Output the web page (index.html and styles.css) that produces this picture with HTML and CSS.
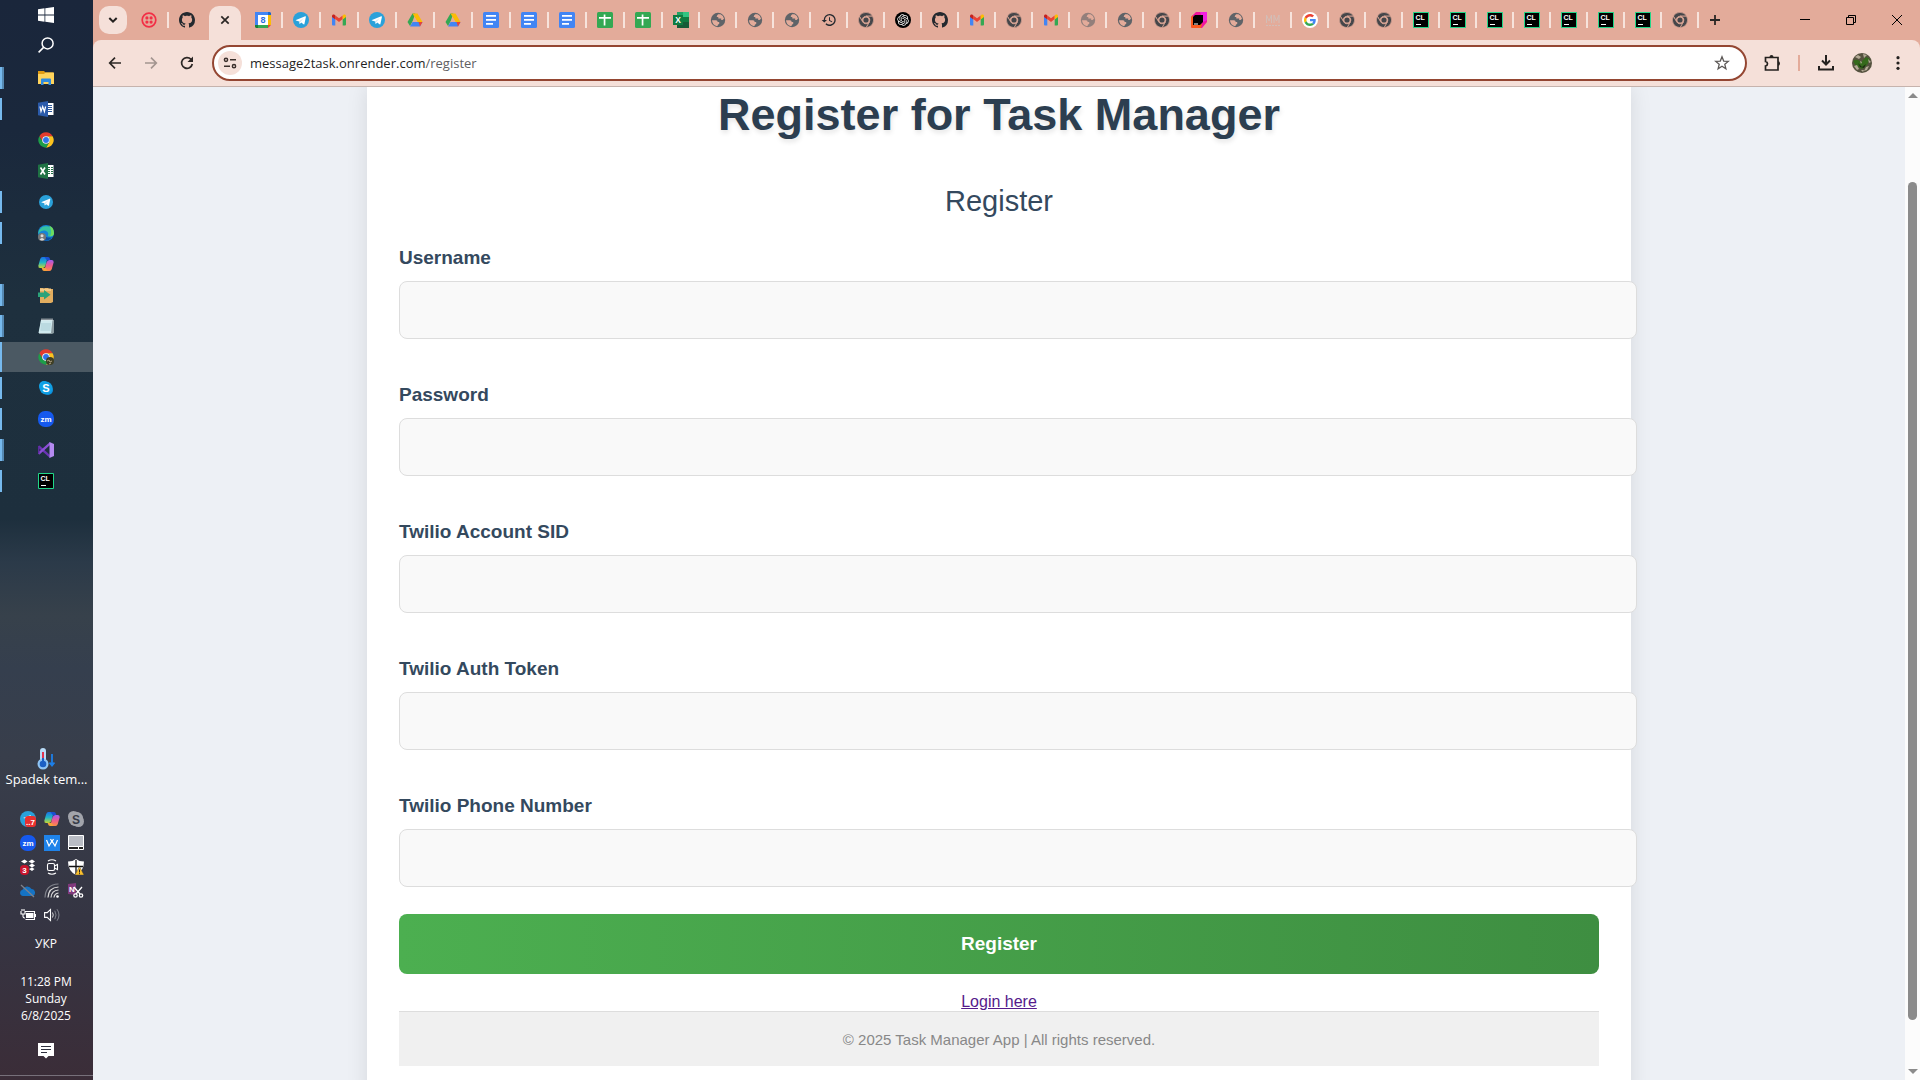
FILE: index.html
```html
<!DOCTYPE html>
<html lang="en">
<head>
<meta charset="utf-8">
<title>Register for Task Manager</title>
<link rel="stylesheet" href="styles.css">
</head>
<body>
<svg class="gradients" aria-hidden="true">
  <linearGradient id="cop1" x1="0" y1="0" x2="0" y2="1"><stop offset="0" stop-color="#1a6fe8"/><stop offset=".5" stop-color="#21b5c4"/><stop offset="1" stop-color="#c8d830"/></linearGradient>
  <linearGradient id="cop2" x1="0" y1="0" x2="0" y2="1"><stop offset="0" stop-color="#a05cf0"/><stop offset=".5" stop-color="#ee5a8e"/><stop offset="1" stop-color="#fb8d45"/></linearGradient>
</svg>
<svg class="sprite" aria-hidden="true">
  <symbol id="windows" viewBox="0 0 16 16"><path fill="#fff" d="M0 2.2 6.5 1.3v6.3H0zM7.3 1.2 16 0v7.6H7.3zM0 8.4h6.5v6.3L0 13.8zM7.3 8.4H16V16l-8.7-1.2z"/></symbol>
  <symbol id="search" viewBox="0 0 16 16"><circle cx="9.6" cy="6.4" r="5.5" fill="none" stroke="#fff" stroke-width="1.5"/><path d="M5.6 10.4.6 15.4" stroke="#fff" stroke-width="1.5"/></symbol>
  <symbol id="explorer" viewBox="0 0 16 16"><path fill="#e09c13" d="M0 1h6l1.5 1.5H15V5H0z"/><path fill="#ffd45c" d="M0 4h6l1.5-1.500H16V14H0z"/><path fill="#2f8be0" d="M3 15V9.500Q3 8.500 4 8.500h8q1 0 1 1V15h-2.500v-3h-5v3z"/></symbol>
  <symbol id="word" viewBox="0 0 16 16"><path fill="#fff" d="M9 2h6.500v12H9z"/><path stroke="#2b579a" d="M10 4.500h4M10 6.500h4M10 8.500h4M10 10.500h4"/><path fill="#2b5bab" d="M0 1.800 10 0v16L0 14.200z"/><path fill="none" stroke="#fff" stroke-width="1.200" d="m2 5.500 1 5 1.700-5 1.700 5 1.200-5"/></symbol>
  <symbol id="excel-old" viewBox="0 0 16 16"><path fill="#fff" d="M9 2h6.500v12H9z"/><path stroke="#1f7244" stroke-dasharray="2 1" d="M10 4.500h5M10 6.500h5M10 8.500h5M10 10.500h5"/><path fill="#1f7244" d="M0 1.800 10 0v16L0 14.200z"/><path fill="none" stroke="#fff" stroke-width="1.600" d="m2.500 4.500 4.500 7M7 4.500l-4.500 7"/></symbol>
  <symbol id="chrome" viewBox="-12 -12 24 24"><path fill="#e33b2e" d="M-9.960-5.750A11.500 11.500 0 0 1 9.960-5.750L0-5.750A5.750 5.750 0 0 0-4.980 2.875Z"/><path fill="#fcc31e" transform="rotate(120)" d="M-9.960-5.750A11.500 11.500 0 0 1 9.960-5.750L0-5.750A5.750 5.750 0 0 0-4.980 2.875Z"/><path fill="#1e9e49" transform="rotate(240)" d="M-9.960-5.750A11.500 11.500 0 0 1 9.960-5.750L0-5.750A5.750 5.750 0 0 0-4.980 2.875Z"/><circle r="5.700" fill="#fff"/><circle r="4.400" fill="#2f74ea"/></symbol>
  <symbol id="chrome-grey" viewBox="-12 -12 24 24"><g fill="#45464a" stroke="#e3ab9a" stroke-width="1"><path d="M-9.960-5.750A11.500 11.500 0 0 1 9.960-5.750L0-5.750A5.750 5.750 0 0 0-4.980 2.875Z"/><path transform="rotate(120)" d="M-9.960-5.750A11.500 11.500 0 0 1 9.960-5.750L0-5.750A5.750 5.750 0 0 0-4.980 2.875Z"/><path transform="rotate(240)" d="M-9.960-5.750A11.500 11.500 0 0 1 9.960-5.750L0-5.750A5.750 5.750 0 0 0-4.980 2.875Z"/></g><circle r="3.900" fill="#45464a"/></symbol>
  <symbol id="telegram" viewBox="0 0 16 16"><circle cx="8" cy="8" r="8" fill="#2aa1da"/><path fill="#fff" d="m3 7.900 9.200-3.700c.5-.2.8.1.7.7l-1.500 7c-.1.500-.5.600-.9.400L8.200 10.600l-1.200 1.200c-.3.200-.5.100-.5-.2l-.3-2.200L3 8.500c-.4-.1-.4-.4 0-.6z"/><path fill="#b9dcef" d="m6.200 9.400 4.600-3.300-3.700 4-.5 1.800z"/></symbol>
  <symbol id="edge" viewBox="0 0 16 16"><circle cx="8" cy="8" r="8" fill="#1683d8"/><path fill="#36c2a0" d="M1 5.500A8 8 0 0 1 16 8c0 2.500-2 3.500-4 3.500-1.500 0-2.500-.5-2-1.500C11 8 9 5.500 6 5.500 4 5.500 2 6.500 0 9z"/><path fill="#6fdd5c" d="M11 .6A8 8 0 0 1 16 8c0 2.500-2 3.500-4 3.200 2-3 1.500-7-1-10.600z"/><path fill="#0f4f9e" d="M6 8c0 4 4 5.500 8 4a8 8 0 0 1-8 3.700z"/><circle cx="4" cy="12" r="4" fill="#777"/><circle cx="4" cy="10.800" r="1.500" fill="#ddd"/><path fill="#ddd" d="M1.600 14.500q2.400-3.200 4.800 0Q4 16.500 1.600 14.500z"/></symbol>
  <symbol id="copilot" viewBox="0 0 16 16"><path fill="url(#cop1)" d="M4.500 1h5.300L7.500 9.500Q6.800 12 4.500 12H2Q0 12 .4 9.500L2.200 3Q2.800 1 4.500 1z"/><path fill="#1b4fd0" d="M6.500 1H10q1.500 0 2 2l.4 1.500H9z"/><path fill="url(#cop2)" d="M11.500 15H6.200L8.500 6.500Q9.200 4 11.500 4H14q2 0 1.600 2.500L13.800 13q-.6 2-2.300 2z"/><path fill="#f7a03a" d="M9.500 15H6q-1.500 0-2-2l-.3-1h4z"/></symbol>
  <symbol id="box" viewBox="0 0 16 16"><path fill="#e2ad5f" d="M2 1h3l1 1 1-1h3l1 1h4v13l-2 1H2z"/><path fill="#f2c885" d="M2 1.500h11V4H2z"/><path fill="#2ba37a" d="M0 5.500h6V3l6.500 4.700L6 12.500V10H0z"/></symbol>
  <symbol id="notepad" viewBox="0 0 16 16"><path fill="#8a9aa0" d="M3 2h13v13l-2 1H1z"/><path fill="#cfe9ee" d="M3 2h11.500L13 15H.5z"/><path stroke="#8fb8c2" stroke-width=".6" d="M3 6h10M2.800 8h10M2.600 10h10M2.400 12h10"/><path stroke="#eee" stroke-dasharray="1 1" stroke-width="2" d="M3.500 1.500H15"/></symbol>
  <symbol id="skype" viewBox="0 0 16 16"><rect x="1" y="1" width="10" height="10" rx="5" fill="#13a5ea"/><rect x="5" y="5" width="10" height="10" rx="5" fill="#0d8fdc"/><circle cx="8" cy="8" r="6.500" fill="#109fe4"/><text x="8" y="12" class="glyph" font-size="11" fill="#fff">S</text></symbol>
  <symbol id="skype-grey" viewBox="0 0 16 16"><rect width="11" height="11" rx="5.500" fill="#a2a4ab"/><rect x="5" y="5" width="11" height="11" rx="5.500" fill="#a2a4ab"/><circle cx="8" cy="8" r="7.300" fill="#a2a4ab"/><text x="8" y="12.500" class="glyph" font-size="12" fill="#373c49">S</text></symbol>
  <symbol id="zoom" viewBox="0 0 16 16"><rect width="16" height="16" rx="7" fill="#1559ee"/><text x="8" y="10.600" class="glyph" font-size="8" fill="#fff">zm</text></symbol>
  <symbol id="vs" viewBox="0 0 16 16"><path fill="#6b35b5" d="M0 4.300 1.500 3.500 12 13v3L0 5.500z"/><path fill="#8c4fd6" d="M0 11.700 1.500 12.500 12 3V0L0 10.500z"/><path fill="#5b2a9c" d="M0 4.300h1.500v7.400H0z"/><path fill="#b48af0" d="m11.500 0 4.500 2v12l-4.500 2z"/></symbol>
  <symbol id="clion" viewBox="0 0 16 16"><path fill="#000" stroke="#21d789" d="M.5.5h15v15H.5z"/><text x="7.200" y="8" class="glyph" font-size="7" fill="#fff">CL</text><path fill="#fff" d="M3 12h5v1H3z"/></symbol>
  <symbol id="toolbox" viewBox="0 0 16 16"><path fill="#f0159d" d="M5 0h11v10l-5 6H1l-1-1V5z"/><path fill="#f020e0" d="M9 0h7v8l-4 2z"/><path fill="#fb5a1e" d="M0 5 2 3v9h9l-1 4H1l-1-1z"/><path fill="#000" d="M2 5l2-2h8v7l-3 3H2z"/><path fill="#fff" d="M3 11.500h4v1H3z"/></symbol>
  <symbol id="twilio" viewBox="0 0 16 16"><circle cx="8" cy="8" r="6.800" fill="none" stroke="#f22f46" stroke-width="1.700"/><g fill="#f22f46"><circle cx="5.900" cy="5.900" r="1.600"/><circle cx="10.100" cy="5.900" r="1.600"/><circle cx="5.900" cy="10.100" r="1.600"/><circle cx="10.100" cy="10.100" r="1.600"/></g></symbol>
  <symbol id="github" viewBox="0 0 16 16"><path fill="#24292f" d="M8 0C3.580 0 0 3.580 0 8c0 3.540 2.290 6.530 5.470 7.590.4.070.55-.17.55-.38 0-.19-.01-.82-.01-1.490-2.010.37-2.530-.49-2.690-.94-.09-.23-.48-.94-.82-1.130-.28-.15-.68-.52-.01-.53.63-.01 1.080.58 1.230.82.72 1.210 1.870.87 2.330.66.07-.52.28-.87.51-1.070-1.780-.2-3.640-.89-3.640-3.950 0-.87.31-1.590.82-2.150-.08-.2-.36-1.020.08-2.120 0 0 .67-.21 2.200.82.64-.18 1.320-.27 2-.27s1.360.09 2 .27c1.530-1.040 2.200-.82 2.200-.82.44 1.100.16 1.920.08 2.120.51.56.82 1.270.82 2.150 0 3.070-1.870 3.750-3.650 3.950.29.25.54.73.54 1.480 0 1.070-.01 1.930-.01 2.200 0 .21.15.46.55.38A8.010 8.010 0 0 0 16 8c0-4.420-3.580-8-8-8z"/></symbol>
  <symbol id="calendar" viewBox="0 0 16 16"><path fill="#4285f4" d="M0 0h13v3H3v10H0z"/><path fill="#1967d2" d="M13 0h2l1 1v2h-3z"/><path fill="#fbbc04" d="M13 3h3v10h-3z"/><path fill="#34a853" d="M3 13h10v3H3z"/><path fill="#188038" d="M0 13h3v3H1l-1-1z"/><path fill="#ea4335" d="M13 13h3l-3 3z"/><path fill="#fff" d="M3 3h10v10H3z"/><text x="8" y="11.200" class="glyph" font-size="9" fill="#2b6de0">8</text></symbol>
  <symbol id="gmail" viewBox="0 0 16 16"><path fill="#4285f4" d="M1 4v8.500q0 1 1 1h2.300V7z"/><path fill="#34a853" d="M15 4v8.500q0 1-1 1h-2.300V7z"/><path fill="#ea4335" d="M4.300 3.500 8 6.300l3.700-2.800V7L8 9.900 4.300 7z"/><path fill="#c5221f" d="M1 5V4c0-1.400 1.500-2 2.500-1.200l.8.700V7.500z"/><path fill="#fbbc04" d="M15 5V4c0-1.400-1.500-2-2.500-1.200l-.8.700V7.500z"/></symbol>
  <symbol id="drive" viewBox="0 0 16 16"><path fill="#34a853" d="M5.500 1.500h2.800L5.700 9 3 14 .5 10z"/><path fill="#fbbc04" d="M5.500 1.500h5l5 8.500h-5z"/><path fill="#4285f4" d="M5.600 10h9.900L13 14.500H3z"/><path fill="#ea4335" d="M11.500 10h4L13 14.500z"/><path fill="#e3ab9a" d="M8 5.700 10.500 10h-5z"/></symbol>
  <symbol id="docs" viewBox="0 0 16 16"><rect width="16" height="16" rx="1.500" fill="#4285f4"/><path fill="#fff" d="M3 3h10v1.700H3zM3 7h10v1.700H3zM3 11h7v1.700H3z"/></symbol>
  <symbol id="sheets" viewBox="0 0 16 16"><rect width="16" height="16" rx="1.500" fill="#34a853"/><path fill="#fff" d="M2 5h4.700V2.500h1.700V5H14v1.700H8.400V13.500H6.700V6.700H2z"/></symbol>
  <symbol id="excel" viewBox="0 0 16 16"><path fill="#185c37" d="M4 0h12v16H4z"/><path fill="#21a366" d="M4 0h6v5H4z"/><path fill="#33c481" d="M10 0h6v5h-6z"/><path fill="#107c41" d="M10 5h6v5h-6z"/><path fill="#107c41" d="M0 3h10v10H0z"/><text x="5" y="11" class="glyph" font-size="8.500" fill="#fff">X</text></symbol>
  <symbol id="globe" viewBox="0 0 16 16"><circle cx="8" cy="8" r="7.200" fill="#5f6368"/><path fill="#e3ab9a" d="M2 8.200h4q1.700 0 1.700 1.700h1.500v2.200q-1.500.2-1.700 1.900l-1 .1Q2.300 12.600 2 8.200zM8.200 2.200h2.300q3 1.300 3.500 4.500l-1.500 1.300h-1.300V6.600H8.300V4.900H6.700q0-1.700 1.500-2.700z"/></symbol>
  <symbol id="history" viewBox="0 0 24 24"><path fill="#24292f" d="M13 3a9 9 0 0 0-9 9H1l3.900 3.900L9 12H6a7 7 0 1 1 2.100 4.900l-1.400 1.500A9 9 0 1 0 13 3zm-1 5v5l4.300 2.500.7-1.200-3.500-2.100V8z"/></symbol>
  <symbol id="gpt" viewBox="0 0 24 24"><circle cx="12" cy="12" r="12" fill="#000"/><path transform="translate(3.400 3.400) scale(.72)" fill="#fff" d="M22.282 9.821a5.985 5.985 0 0 0-.516-4.911 6.046 6.046 0 0 0-6.510-2.900A6.065 6.065 0 0 0 4.981 4.182a5.985 5.985 0 0 0-3.998 2.900 6.046 6.046 0 0 0 .743 7.097 5.980 5.980 0 0 0 .511 4.911 6.051 6.051 0 0 0 6.515 2.900A5.985 5.985 0 0 0 13.260 24a6.056 6.056 0 0 0 5.772-4.206 5.989 5.989 0 0 0 3.998-2.900 6.056 6.056 0 0 0-.748-7.073zm-9.022 12.608a4.476 4.476 0 0 1-2.876-1.041l.142-.080 4.778-2.758a.795.795 0 0 0 .393-.681v-6.737l2.020 1.169a.071.071 0 0 1 .038.052v5.583a4.504 4.504 0 0 1-4.495 4.494zm-9.661-4.125a4.471 4.471 0 0 1-.535-3.014l.142.085 4.783 2.758a.771.771 0 0 0 .781 0l5.843-3.369v2.332a.080.080 0 0 1-.033.062L9.740 19.950a4.499 4.499 0 0 1-6.141-1.646zM2.341 7.896a4.485 4.485 0 0 1 2.366-1.973V11.600a.766.766 0 0 0 .388.677l5.814 3.354-2.020 1.169a.076.076 0 0 1-.071 0l-4.830-2.787A4.504 4.504 0 0 1 2.341 7.872zm16.596 3.856L13.104 8.364 15.119 7.200a.076.076 0 0 1 .071 0l4.830 2.791a4.494 4.494 0 0 1-.677 8.104v-5.677a.790.790 0 0 0-.407-.667zm2.011-3.023l-.142-.085-4.774-2.782a.776.776 0 0 0-.785 0L9.409 9.230V6.897a.066.066 0 0 1 .028-.062l4.830-2.787a4.499 4.499 0 0 1 6.680 4.660zM8.307 12.863l-2.020-1.164a.080.080 0 0 1-.038-.057V6.074a4.499 4.499 0 0 1 7.376-3.454l-.142.081L8.704 5.459a.795.795 0 0 0-.393.681zm1.098-2.365l2.602-1.500 2.607 1.500v2.999l-2.597 1.500-2.607-1.500Z"/></symbol>
  <symbol id="mm" viewBox="0 0 16 16"><path fill="none" stroke="#d3bdb6" d="M1.500 11V3L4 9l2.500-6v8M9 11V3l2.500 6L14 3v8"/><path stroke="#d3bdb6" stroke-dasharray="2 1" d="M1 13.500h14"/></symbol>
  <symbol id="google" viewBox="-8 -8 64 64"><circle cx="24" cy="24" r="32" fill="#fff"/><path fill="#EA4335" d="M24 9.500c3.540 0 6.710 1.220 9.210 3.600l6.850-6.850C35.900 2.380 30.470 0 24 0 14.620 0 6.510 5.380 2.560 13.220l7.980 6.190C12.430 13.720 17.740 9.500 24 9.500z"/><path fill="#4285F4" d="M46.980 24.550c0-1.570-.15-3.090-.38-4.550H24v9.020h12.940c-.58 2.960-2.260 5.480-4.780 7.180l7.730 6c4.510-4.180 7.090-10.360 7.090-17.650z"/><path fill="#FBBC05" d="M10.530 28.590c-.48-1.450-.76-2.990-.76-4.590s.27-3.140.76-4.590l-7.980-6.190C.92 16.460 0 20.120 0 24c0 3.880.92 7.540 2.560 10.780l7.970-6.190z"/><path fill="#34A853" d="M24 48c6.480 0 11.930-2.130 15.890-5.810l-7.730-6c-2.150 1.450-4.920 2.300-8.160 2.300-6.260 0-11.570-4.220-13.470-9.910l-7.980 6.190C6.510 42.620 14.620 48 24 48z"/></symbol>
</svg>

<div class="desktop">
  <aside class="taskbar">
    <nav class="apps" aria-label="Taskbar">
      <button class="app" aria-label="Start"><svg class="icon"><use href="#windows"/></svg></button>
      <button class="app" aria-label="Search"><svg class="icon"><use href="#search"/></svg></button>
      <button class="app running many first" aria-label="File Explorer"><svg class="icon"><use href="#explorer"/></svg></button>
      <button class="app running" aria-label="Word"><svg class="icon"><use href="#word"/></svg></button>
      <button class="app" aria-label="Chrome"><svg class="icon"><use href="#chrome"/></svg></button>
      <button class="app" aria-label="Excel"><svg class="icon"><use href="#excel-old"/></svg></button>
      <button class="app running" aria-label="Telegram"><svg class="icon small"><use href="#telegram"/></svg></button>
      <button class="app running" aria-label="Edge"><svg class="icon"><use href="#edge"/></svg></button>
      <button class="app" aria-label="Copilot"><svg class="icon"><use href="#copilot"/></svg></button>
      <button class="app running many" aria-label="Archive"><svg class="icon"><use href="#box"/></svg></button>
      <button class="app running many" aria-label="Notepad"><svg class="icon"><use href="#notepad"/></svg></button>
      <button class="app running current" aria-label="Chrome profile"><svg class="icon" viewBox="0 0 16 16"><use href="#chrome" width="16" height="16"/><circle cx="12" cy="12" r="4" fill="#3f3f25"/><path stroke="#b5a584" d="m9 12 2-1 1 2 2-1M11 15l2-1"/></svg></button>
      <button class="app running" aria-label="Skype"><svg class="icon"><use href="#skype"/></svg></button>
      <button class="app running" aria-label="Zoom"><svg class="icon"><use href="#zoom"/></svg></button>
      <button class="app running many" aria-label="Visual Studio"><svg class="icon"><use href="#vs"/></svg></button>
      <button class="app running" aria-label="CLion"><svg class="icon"><use href="#clion"/></svg></button>
    </nav>
    <div class="weather">
      <svg class="thermo" viewBox="0 0 18 22"><rect x="3" y="0" width="6" height="17" rx="3" fill="#b9dcf8"/><circle cx="6" cy="16" r="5.500" fill="#8fc4f3"/><circle cx="6" cy="16" r="3.300" fill="#1b5fc4"/><path stroke="#1b5fc4" stroke-width="2" d="M6 9v6"/><path stroke="#e03550" stroke-width="2" d="M6 4v6"/><path fill="none" stroke="#1d7fe8" stroke-width="1.800" d="M15 6v11M12.500 14.500 15 17.500l2.500-3"/></svg>
      <span>Spadek tem...</span>
    </div>
    <div class="tray">
      <svg class="icon" viewBox="0 0 16 16"><circle cx="8" cy="8" r="8" fill="#2aa1da"/><path fill="#fff" d="m3 7 8-3-2 4z"/><rect x="5" y="5" width="11" height="11" rx="3" fill="#e8302f"/><text x="10.500" y="13.500" class="glyph" font-size="8" fill="#fff">..7</text></svg>
      <svg class="icon"><use href="#copilot"/></svg>
      <svg class="icon"><use href="#skype-grey"/></svg>
      <svg class="icon"><use href="#zoom"/></svg>
      <svg class="icon" viewBox="0 0 16 16"><path fill="#1f83ea" d="M0 0h16v16H0z"/><path fill="none" stroke="#fff" stroke-width="1.200" d="m2.500 5 2.500 6 3-5 3 5 2.500-6M6.500 4 8 6.500 9.500 4"/></svg>
      <svg class="icon" viewBox="0 0 16 16"><path fill="#b9bcc4" stroke="#fff" d="M.5.500h15v11H.500z"/><path fill="#222" stroke="#fff" d="M.500 11.500h10v3h-10zM10.500 11.500h5v3h-5z"/></svg>
      <svg class="icon" viewBox="0 0 16 16"><path fill="#fff" d="m1 2.500 3.500-2 3 2-3 2zM8.500 2.500l3.500-2 3 2-3 2zM9 6.500l3-2 3 2-3 2zM9 10l3-1.500 2.500 1.500L12 12z"/><rect y="6" width="9" height="10" rx="4" fill="#c8142c"/><text x="4.500" y="14" class="glyph" font-size="8" fill="#fff">3</text></svg>
      <svg class="icon" viewBox="0 0 16 16"><g fill="none" stroke="#fff" stroke-width="1.100"><rect x="3.500" y="4.500" width="7" height="7" rx="1.500"/><path d="m10.500 7 3-1.500v5l-3-1.500M4 2Q8-.5 12 2M4 14q4 2.500 8 0"/></g></svg>
      <svg class="icon" viewBox="0 0 16 16"><path fill="#fff" d="M8 0q3 2.500 8 2.500Q16 12 8 16 0 12 0 2.500 5 2.500 8 0z"/><path fill="none" stroke="#111" stroke-width="1.300" d="M8 1v14M1 7.500h14"/><path fill="#fbc02d" stroke="#333" stroke-width=".4" d="M11.500 7.500 16 16H7z"/><path stroke="#222" d="M11.500 10.500v3M11.500 14.200v1"/></svg>
      <svg class="icon" viewBox="0 0 16 16"><path fill="#1573c4" d="M3 13a3.200 3.200 0 0 1-.5-6.300A5 5 0 0 1 11.500 6 3.700 3.700 0 0 1 13 13z"/><path stroke="#7d828c" stroke-width="1.300" d="m1 2 13 12"/></svg>
      <svg class="icon" viewBox="0 0 16 16"><g fill="none" stroke="#ddd" stroke-width="1.200"><path d="M4 14.500Q4.500 4.500 14.500 4M7 14.500q.5-7 7.500-7.500M10 14.500q.5-4 4.500-4.500"/><path stroke="#80838c" d="M1 14.500Q1.500 1.500 14.500 1"/></g><circle cx="13.500" cy="13.500" r="1.300" fill="#fff"/></svg>
      <svg class="icon" viewBox="0 0 16 16"><path fill="#80397b" d="M0 1 8 0v12l-8-1z"/><text x="4" y="8.500" class="glyph" font-size="8" fill="#fff">N</text><g fill="none" stroke="#fff" stroke-width="1.300"><path d="m6 4 6 7M14 4l-6 7"/><circle cx="7.500" cy="12.500" r="1.700"/><circle cx="13" cy="12.500" r="1.700"/></g></svg>
      <svg class="icon" viewBox="0 0 16 16"><path fill="none" stroke="#fff" stroke-width="1.100" d="M5 4.500h9.500v8H5.500M1 4v3h4V4M2 2v2M4 2v2M3 7v2.500q0 1.500 2 1.500"/><path fill="#fff" d="M6 6h7.500v5H6zM14.500 7H16v3h-1.500z"/></svg>
      <svg class="icon" viewBox="0 0 16 16"><path fill="none" stroke="#fff" stroke-width="1.100" d="M.6 5.600h2.600L6.500 2.500v11L3.200 10.400H.6z"/><path fill="none" stroke="#ddd" d="M8.500 5.500q1.500 2.500 0 5"/><path fill="none" stroke="#80838c" d="M10.800 3.800q2.500 4.200 0 8.400M13 2.200q4 5.800 0 11.600"/></svg>
    </div>
    <span class="lang">УКР</span>
    <div class="clock"><span>11:28 PM</span><span>Sunday</span><span>6/8/2025</span></div>
    <button class="notify" aria-label="Notifications"><svg class="icon" viewBox="0 0 16 16"><path fill="#fff" d="M0 0h16v13h-5.500L8 15.500 5.500 13H0z"/><path stroke="#2f303e" d="M3 3.500h10M3 6.500h10M3 9.500h6"/></svg></button>
  </aside>

  <div class="browser">
    <header class="tabstrip">
      <button class="tab-search" aria-label="Search tabs"><svg class="icon" viewBox="0 0 16 16"><path fill="none" stroke="#24211f" stroke-width="2" d="m4.300 6 3.700 3.700L11.700 6"/></svg></button>
      <nav class="tabs" aria-label="Tabs">
        <button class="tab" aria-label="Twilio"><svg class="icon"><use href="#twilio"/></svg></button>
        <button class="tab bare" aria-label="GitHub"><svg class="icon"><use href="#github"/></svg></button>
        <button class="tab active" aria-label="Close tab"><svg class="icon" viewBox="0 0 16 16"><path stroke="#2a2624" stroke-width="1.700" d="m4.300 4.300 7.400 7.400M11.700 4.300l-7.400 7.400"/></svg></button>
        <button class="tab" aria-label="Calendar"><svg class="icon"><use href="#calendar"/></svg></button>
        <button class="tab" aria-label="Telegram"><svg class="icon"><use href="#telegram"/></svg></button>
        <button class="tab" aria-label="Gmail"><svg class="icon"><use href="#gmail"/></svg></button>
        <button class="tab" aria-label="Telegram"><svg class="icon"><use href="#telegram"/></svg></button>
        <button class="tab" aria-label="Drive"><svg class="icon"><use href="#drive"/></svg></button>
        <button class="tab" aria-label="Drive"><svg class="icon"><use href="#drive"/></svg></button>
        <button class="tab" aria-label="Docs"><svg class="icon"><use href="#docs"/></svg></button>
        <button class="tab" aria-label="Docs"><svg class="icon"><use href="#docs"/></svg></button>
        <button class="tab" aria-label="Docs"><svg class="icon"><use href="#docs"/></svg></button>
        <button class="tab" aria-label="Sheets"><svg class="icon"><use href="#sheets"/></svg></button>
        <button class="tab" aria-label="Sheets"><svg class="icon"><use href="#sheets"/></svg></button>
        <button class="tab narrow" aria-label="Excel"><svg class="icon"><use href="#excel"/></svg></button>
        <button class="tab narrow" aria-label="Site"><svg class="icon"><use href="#globe"/></svg></button>
        <button class="tab narrow" aria-label="Site"><svg class="icon"><use href="#globe"/></svg></button>
        <button class="tab narrow" aria-label="Site"><svg class="icon"><use href="#globe"/></svg></button>
        <button class="tab narrow" aria-label="History"><svg class="icon"><use href="#history"/></svg></button>
        <button class="tab narrow" aria-label="Chrome"><svg class="icon"><use href="#chrome-grey"/></svg></button>
        <button class="tab narrow" aria-label="ChatGPT"><svg class="icon"><use href="#gpt"/></svg></button>
        <button class="tab narrow" aria-label="GitHub"><svg class="icon"><use href="#github"/></svg></button>
        <button class="tab narrow" aria-label="Gmail"><svg class="icon"><use href="#gmail"/></svg></button>
        <button class="tab narrow" aria-label="Chrome"><svg class="icon"><use href="#chrome-grey"/></svg></button>
        <button class="tab narrow" aria-label="Gmail"><svg class="icon"><use href="#gmail"/></svg></button>
        <button class="tab narrow" aria-label="Site"><svg class="icon faded"><use href="#globe"/></svg></button>
        <button class="tab narrow" aria-label="Site"><svg class="icon"><use href="#globe"/></svg></button>
        <button class="tab narrow" aria-label="Chrome"><svg class="icon"><use href="#chrome-grey"/></svg></button>
        <button class="tab narrow" aria-label="JetBrains"><svg class="icon"><use href="#toolbox"/></svg></button>
        <button class="tab narrow" aria-label="Site"><svg class="icon"><use href="#globe"/></svg></button>
        <button class="tab narrow" aria-label="MM"><svg class="icon"><use href="#mm"/></svg></button>
        <button class="tab narrow" aria-label="Google"><svg class="icon"><use href="#google"/></svg></button>
        <button class="tab narrow" aria-label="Chrome"><svg class="icon"><use href="#chrome-grey"/></svg></button>
        <button class="tab narrow" aria-label="Chrome"><svg class="icon"><use href="#chrome-grey"/></svg></button>
        <button class="tab narrow" aria-label="CLion"><svg class="icon"><use href="#clion"/></svg></button>
        <button class="tab narrow" aria-label="CLion"><svg class="icon"><use href="#clion"/></svg></button>
        <button class="tab narrow" aria-label="CLion"><svg class="icon"><use href="#clion"/></svg></button>
        <button class="tab narrow" aria-label="CLion"><svg class="icon"><use href="#clion"/></svg></button>
        <button class="tab narrow" aria-label="CLion"><svg class="icon"><use href="#clion"/></svg></button>
        <button class="tab narrow" aria-label="CLion"><svg class="icon"><use href="#clion"/></svg></button>
        <button class="tab narrow" aria-label="CLion"><svg class="icon"><use href="#clion"/></svg></button>
        <button class="tab narrow" aria-label="Chrome"><svg class="icon"><use href="#chrome-grey"/></svg></button>
        <button class="new-tab" aria-label="New tab"><svg class="icon" viewBox="0 0 16 16"><path stroke="#2a2624" stroke-width="1.800" d="M8 3v10M3 8h10"/></svg></button>
      </nav>
      <div class="window-controls">
        <button aria-label="Minimize"><svg class="icon" viewBox="0 0 16 16"><path stroke="#000" d="M3 7.500h10"/></svg></button>
        <button aria-label="Restore"><svg class="icon" viewBox="0 0 16 16"><path fill="none" stroke="#000" d="M3.500 5.500h7v7h-7zM5.500 5.500v-2h7v7h-2"/></svg></button>
        <button aria-label="Close"><svg class="icon" viewBox="0 0 16 16"><path stroke="#000" d="m3 3 10 10M13 3 3 13"/></svg></button>
      </div>
    </header>
    <div class="toolbar-wrap">
    <div class="toolbar">
      <button class="tool" aria-label="Back"><svg class="icon" viewBox="0 0 16 16"><path fill="none" stroke="#2c2725" stroke-width="1.700" d="M14 8H3M8 2.700 2.700 8 8 13.300"/></svg></button>
      <button class="tool" aria-label="Forward"><svg class="icon" viewBox="0 0 16 16"><path fill="none" stroke="#a39590" stroke-width="1.700" d="M2 8h11M8 2.700 13.300 8 8 13.300"/></svg></button>
      <button class="tool" aria-label="Reload"><svg class="icon" viewBox="0 0 16 16"><path fill="none" stroke="#2c2725" stroke-width="1.700" d="M13.300 9A5.400 5.400 0 1 1 12 4.300L13 5.500"/><path fill="#2c2725" d="M14 1.500V7H8.500z"/></svg></button>
      <div class="omnibox">
        <button class="site-info" aria-label="Site information"><svg class="icon" viewBox="0 0 16 16"><g fill="none" stroke="#3a2f2b" stroke-width="1.500"><circle cx="4" cy="4.800" r="1.600"/><path d="M8 4.800h6M2 11.200h6"/><circle cx="12" cy="11.200" r="1.600"/></g></svg></button>
        <span class="url">message2task.onrender.com<span class="path">/register</span></span>
        <button class="star" aria-label="Bookmark"><svg class="icon" viewBox="0 0 16 16"><path fill="none" stroke="#5c5856" stroke-width="1.300" d="m8 1.800 1.700 4.300 4.600.3-3.500 2.900 1.100 4.500L8 11.300l-3.900 2.500 1.100-4.500-3.500-2.900 4.600-.3z"/></svg></button>
      </div>
      <button class="tool ext" aria-label="Extensions"><svg class="icon" viewBox="0 0 16 16"><path fill="none" stroke="#24211f" stroke-width="1.700" d="M1.500 2.500h12.500v12.500h-12.500v-4q2-.4 2-2.200t-2-2.300z"/><path fill="#24211f" d="M5.500 2q0-2 2-2t2 2zM14 6.300q2 0 2 2.200t-2 2.200z"/></svg></button>
      <span class="divider"></span>
      <button class="tool" aria-label="Downloads"><svg class="icon" viewBox="0 0 16 16"><path fill="none" stroke="#24211f" stroke-width="2" d="M8 0v9M4 5.500l4 4 4-4M1 11v3.500h14V11"/></svg></button>
      <button class="tool" aria-label="Profile"><svg class="avatar" viewBox="0 0 20 20"><circle cx="10" cy="10" r="10" fill="#55523f"/><path fill="#356a1c" d="M1 8q4-3 8 1l5-5 4 2-3 6-5 4-6-3z"/><path fill="#b3aa96" d="m3 4 3-2 3 2-2 2zM11 1l4 1-3 3zM2 13l3-1 2 4-2 1zM14 14l3-1-2 4-3 1zM8 8l2 1-1 2zM16 6l3 3-2 1zM9 17l3 0-1 2z"/><path fill="#1b2c10" d="m6 10 4 4 4-3-2 4-4-1z"/></svg></button>
      <button class="tool" aria-label="Menu"><svg class="icon" viewBox="0 0 16 16"><g fill="#24211f"><circle cx="8" cy="2.700" r="1.600"/><circle cx="8" cy="8" r="1.600"/><circle cx="8" cy="13.300" r="1.600"/></g></svg></button>
    </div>
    </div>
    <div class="viewport">
      <div class="page">
        <main class="container">
          <h1>Register for Task Manager</h1>
          <h2>Register</h2>
          <form>
            <div class="field"><label for="username">Username</label><input id="username" type="text"></div>
            <div class="field"><label for="password">Password</label><input id="password" type="password"></div>
            <div class="field"><label for="sid">Twilio Account SID</label><input id="sid" type="text"></div>
            <div class="field"><label for="token">Twilio Auth Token</label><input id="token" type="text"></div>
            <div class="field"><label for="phone">Twilio Phone Number</label><input id="phone" type="text"></div>
            <button class="submit" type="submit">Register</button>
          </form>
          <p class="login"><a href="#login">Login here</a></p>
          <footer>© 2025 Task Manager App | All rights reserved.</footer>
        </main>
      </div>
      <div class="scrollbar" aria-hidden="true"><span class="arrow up"></span><span class="thumb"></span><span class="arrow down"></span></div>
    </div>
  </div>
</div>
</body>
</html>
```
FILE: styles.css
```css
* { box-sizing: border-box; }

body {
  margin: 0;
  font-family: "Liberation Sans", Arial, sans-serif;
}

button {
  margin: 0;
  padding: 0;
  border: 0;
  background: none;
  font: inherit;
}

.sprite { display: none; }
.gradients { position: absolute; width: 0; height: 0; }
.icon { display: block; width: 16px; height: 16px; flex: none; }
.icon.small { width: 14px; height: 14px; }
.faded { opacity: 0.6; }
.glyph { font-family: "Liberation Sans", Arial, sans-serif; font-weight: 700; text-anchor: middle; }

.desktop { display: flex; height: 100vh; overflow: hidden; }

/* Taskbar */
.taskbar {
  flex: none;
  width: 93px;
  display: flex;
  flex-direction: column;
  align-items: center;
  background:
    linear-gradient(#77707a, #77707a) 0 calc(100% - 4px) / 100% 1px no-repeat,
    linear-gradient(#1a263b 0%, #1a283c 12%, #1e303e 28%, #1d2f3d 48%, #2b3a49 52%, #37414b 57%, #353f4e 62%, #383e4b 70%, #353543 85%, #3b2d38 100%);
  color: #fff;
  font-family: "Open Sans", "Noto Sans", sans-serif;
  font-size: 12px;
}
.apps { align-self: stretch; display: flex; flex-direction: column; }
.app {
  display: flex;
  align-items: center;
  justify-content: center;
  height: 30px;
  margin-bottom: 1px;
  padding-right: 1px;
  background-repeat: no-repeat;
  background-position: 0 center;
}
.app:nth-child(-n+2) { margin-bottom: 0; }
.app.first { margin-top: 3px; }
.running { background-image: linear-gradient(#76b9ed, #76b9ed); background-size: 2px 22px; }
.many { background-image: linear-gradient(90deg, #76b9ed 2px, #5589b3 2px); background-size: 4px 22px; }
.current { background-color: #4b5963; background-size: 2px 30px; }

.weather { margin-top: auto; text-align: center; font-size: 13px; line-height: 18px; }
.thermo { display: block; width: 18px; height: 22px; margin: 0 auto; }
.tray {
  display: grid;
  grid-template-columns: repeat(3, 16px);
  gap: 8px;
  margin: 23px 0 0 11px;
}
.lang { margin-top: 12px; padding-right: 1px; line-height: 18px; }
.clock { display: flex; flex-direction: column; align-items: center; margin-top: 20px; padding-right: 1px; line-height: 17px; }
.notify { margin: 19px 0 21px; padding-right: 1px; }

/* Browser window */
.browser { flex: 1; min-width: 0; display: flex; flex-direction: column; }
.tabstrip { display: flex; align-items: stretch; height: 40px; flex: none; padding-left: 6px; background: #e3ab9a; }
.tab-search {
  display: flex;
  align-items: center;
  justify-content: center;
  align-self: center;
  width: 28px;
  height: 28px;
  margin-right: 4px;
  border-radius: 10px;
  background: #f5e0d9;
}
.tabs { display: flex; flex: 1; min-width: 0; }
.tab {
  flex: none;
  display: flex;
  align-items: center;
  width: 38px;
  padding-left: 10px;
  background: linear-gradient(#f7e3dc, #f7e3dc) right center / 2px 16px no-repeat;
}
.tab.narrow { width: 37px; }
.tab.bare { background: none; }
.tab.active {
  width: 32px;
  margin: 6px 4px 0 2px;
  padding: 0 0 6px 8px;
  border-radius: 10px 10px 0 0;
  background: #f5e0d9;
}
.new-tab { flex: none; display: flex; align-items: center; justify-content: center; width: 32px; }
.window-controls { display: flex; }
.window-controls button { display: flex; align-items: center; justify-content: center; width: 46px; }

.toolbar-wrap { flex: none; background: #e3ab9a; }
.toolbar {
  display: flex;
  align-items: center;
  height: 47px;
  padding: 0 4px;
  border-bottom: 1px solid #c6b3ad;
  border-radius: 8px 8px 0 0;
  background: #f5e0d9;
}
.tool { flex: none; display: flex; align-items: center; justify-content: center; width: 36px; height: 36px; }
.ext { margin-left: 7px; }
.divider { width: 2px; height: 16px; margin: 0 8px; background: #e3ab9a; }
.omnibox {
  flex: 1;
  min-width: 0;
  display: flex;
  align-items: center;
  height: 36px;
  margin-left: 7px;
  padding: 0 15px 0 4px;
  border: 2px solid #944632;
  border-radius: 18px;
  background: #fff;
}
.site-info { display: flex; align-items: center; justify-content: center; width: 24px; height: 24px; border-radius: 12px; background: #f5e0d9; }
.url { flex: 1; margin-left: 8px; font-family: "Open Sans", "Noto Sans", sans-serif; font-size: 13px; color: #1f1f1f; }
.path { color: #5f6062; }
.avatar { display: block; width: 20px; height: 20px; }

/* Web page */
.viewport { flex: 1; min-height: 0; display: flex; }
.page { flex: 1; min-width: 0; overflow: hidden; background: #edf0f5; }
.container {
  max-width: 1264px;
  min-height: 100%;
  margin: 0 auto;
  padding: 0 32px 32px;
  background: #fff;
  box-shadow: 0 0 20px rgba(0, 0, 0, 0.1);
  text-align: center;
}
h1 {
  margin: 0 0 40px;
  color: #2c3e50;
  font-size: 45px;
  line-height: 56px;
  text-shadow: 1px 3px 5px rgba(0, 0, 0, 0.1);
}
h2 { margin: 0 0 27px; color: #34495e; font-size: 29px; font-weight: 400; line-height: 36px; }
.field { margin-bottom: 44px; text-align: left; }
.field:nth-of-type(5) { margin-bottom: 27px; }
.field label { display: block; margin-bottom: 11px; color: #34495e; font-size: 19px; font-weight: 700; line-height: 24px; }
.field input {
  display: block;
  box-sizing: content-box;
  width: 100%;
  height: 24px;
  padding: 16px 18px;
  border: 1px solid #ddd;
  border-radius: 8px;
  background: #f9f9f9;
  font: 18px "Liberation Sans", Arial, sans-serif;
}
.submit {
  display: block;
  width: 100%;
  height: 60px;
  border-radius: 8px;
  background: linear-gradient(90deg, #4caf50, #3e8e41);
  color: #fff;
  font-size: 19px;
  font-weight: 700;
}
.login { margin: 19px 0 0; font-size: 16px; line-height: 18px; }
.login a { color: #551a8b; }
footer {
  padding: 19px 18px 17px;
  border-top: 1px solid #ddd;
  background: #f0f0f0;
  color: #888;
  font-size: 15px;
  line-height: 18px;
}

.scrollbar { flex: none; display: flex; flex-direction: column; align-items: center; width: 15px; padding: 6px 0; background: #fcfcfc; }
.arrow { width: 0; height: 0; border: 5px solid transparent; }
.arrow.up { border-top: 0; border-bottom-color: #8b8b8b; }
.arrow.down { border-bottom: 0; border-top-color: #8b8b8b; }
.thumb { flex: 1; width: 9px; margin: 84px 0 49px; border-radius: 5px; background: #8b8b8b; }
```
